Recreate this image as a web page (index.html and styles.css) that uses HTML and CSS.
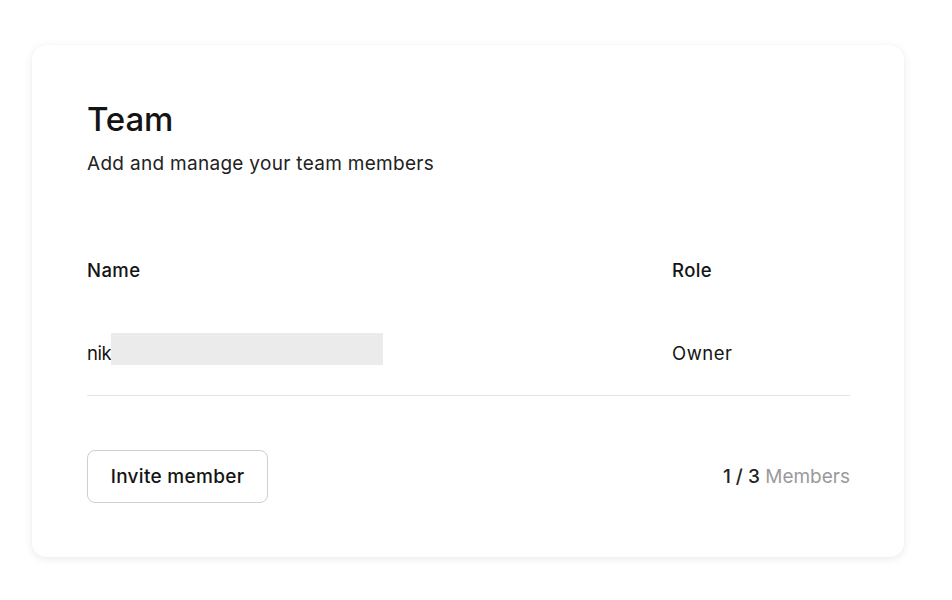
FILE: index.html
```html
<!DOCTYPE html>
<html>
<head>
<meta charset="utf-8">
<link rel="stylesheet" href="styles.css">
</head>
<body>
<div class="page">
  <section class="card">
    <h1 class="title">Team</h1>
    <p class="subtitle">Add and manage your team members</p>
    <div class="table">
      <div class="row head">
        <div class="col-name">Name</div>
        <div class="col-role">Role</div>
      </div>
      <div class="row member">
        <div class="col-name"><span class="nick">nik</span><span class="redact"></span></div>
        <div class="col-role">Owner</div>
      </div>
    </div>
    <div class="footer">
      <button class="invite">Invite member</button>
      <div class="count"><span class="num">1 / 3</span> <span class="label">Members</span></div>
    </div>
  </section>
</div>
</body>
</html>
```
FILE: styles.css
```css
html, body {
  margin: 0;
  padding: 0;
  background: #ffffff;
}
body {
  font-family: Inter, "Liberation Sans", sans-serif;
  color: #141414;
}
.page {
  padding: 45px 48px 43px 32px;
}
.card {
  background: #fff;
  border-radius: 14px;
  box-shadow: 0 2px 10px rgba(0,0,0,0.08), 0 0 2px rgba(0,0,0,0.04);
  padding: 54px 54px 54px 55px;
}
.title {
  margin: 0;
  font-size: 33px;
  font-weight: 500;
  line-height: 40px;
  letter-spacing: -0.1px;
}
.subtitle {
  margin: 12px 0 0;
  font-size: 19px;
  line-height: 26px;
  letter-spacing: 0.3px;
  color: #222;
}
.table {
  margin-top: 80px;
  border-bottom: 1px solid #e4e4e4;
}
.row {
  display: flex;
  align-items: flex-end;
}
.col-name {
  flex: 1;
  display: flex;
  align-items: flex-end;
}
.col-role {
  width: 178px;
}
.head {
  font-size: 18.5px;
  font-weight: 500;
  line-height: 26px;
  letter-spacing: 0.4px;
}
.member {
  font-size: 18.5px;
  line-height: 23px;
  margin-top: 50px;
  padding-bottom: 30px;
}
.member .col-role {
  letter-spacing: 0.5px;
}
.nick {
  letter-spacing: -0.4px;
}
.redact {
  display: inline-block;
  width: 272px;
  height: 32px;
  background: #ebebeb;
}
.footer {
  margin-top: 54px;
  display: flex;
  justify-content: space-between;
  align-items: center;
}
.invite {
  font-family: inherit;
  font-size: 19px;
  font-weight: 500;
  letter-spacing: 0.3px;
  color: #141414;
  background: #fff;
  border: 1px solid #cfcfcf;
  border-radius: 8px;
  width: 181px;
  height: 53px;
  padding: 0;
}
.count {
  font-size: 19px;
  line-height: 26px;
}
.num {
  color: #222;
  font-weight: 500;
}
.label {
  color: #9a9a9a;
}
```
